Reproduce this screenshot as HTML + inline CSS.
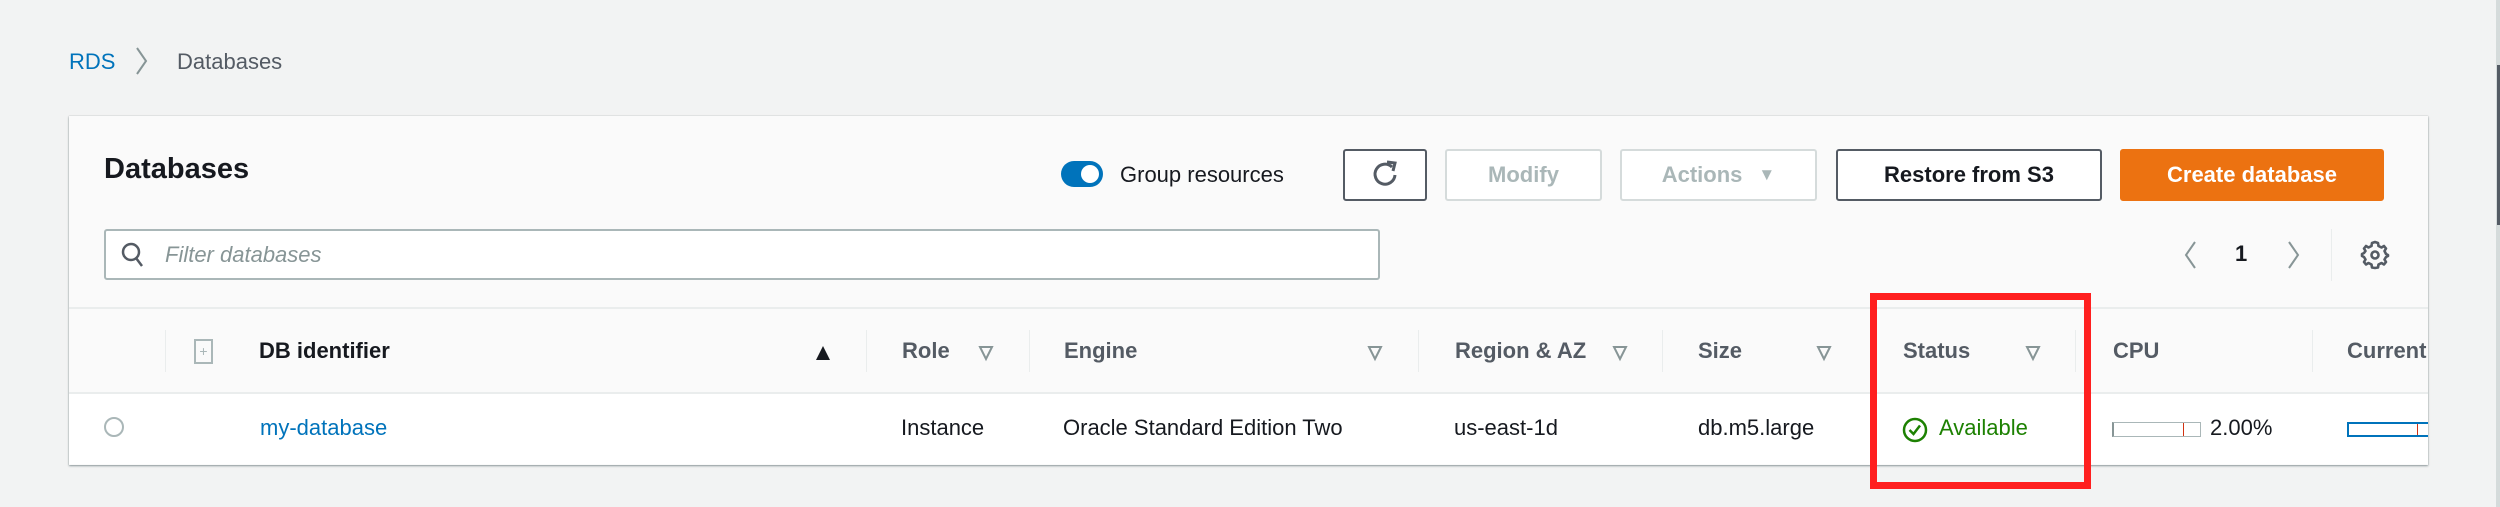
<!DOCTYPE html>
<html><head><meta charset="utf-8"><style>
*{margin:0;padding:0;box-sizing:border-box}
body{width:2500px;height:507px;background:#f2f3f3;font-family:"Liberation Sans",sans-serif;position:relative;overflow:hidden;color:#16191f}
.a{position:absolute;white-space:nowrap}
.t{font-size:22px;line-height:26px}
.b{font-weight:bold}
.btn{position:absolute;height:52px;border:2px solid #545b64;border-radius:3px;background:#fff;font-size:22px;font-weight:bold;display:flex;align-items:center;justify-content:center;color:#545b64}
.dis{border:2px solid #d5dbdb;color:#aab7b8}
.h{color:#545b64;font-weight:bold;font-size:22px;top:338px}
.div{position:absolute;top:330px;width:1px;height:42px;background:#eaeded}
.tri{position:absolute;top:344px}
</style></head><body>
<div class="a t" style="left:69px;top:49px;color:#0073bb">RDS</div>
<svg class="a" style="left:134px;top:46px" width="16" height="30"><path d="M3 2 L12 15 L3 28" stroke="#879596" stroke-width="2" fill="none"/></svg>
<div class="a t" style="left:177px;top:49px;color:#545b64">Databases</div>
<div class="a" style="right:0;top:0;width:4px;height:507px;background:#d5dbdb"></div>
<div class="a" style="right:0;top:65px;width:3px;height:160px;background:#545b64"></div>

<div class="a" style="left:69px;top:116px;width:2359px;height:349px;background:#fafafa;box-shadow:0 1px 2px rgba(0,28,36,.4),0 0 1px rgba(0,28,36,.25)"></div>
<div class="a b" style="left:104px;top:152px;font-size:29px;line-height:34px">Databases</div>

<div class="a" style="left:1061px;top:161px;width:42px;height:26px;border-radius:13px;background:#0073bb"></div>
<div class="a" style="left:1081px;top:165px;width:18px;height:18px;border-radius:9px;background:#fff"></div>
<div class="a t" style="left:1120px;top:162px;color:#16191f">Group resources</div>

<div class="btn" style="left:1343px;top:149px;width:84px"><svg width="30" height="32" viewBox="0 0 30 32"><path d="M22 8 A10 10 0 1 0 25 16" stroke="#545b64" stroke-width="3" fill="none"/><path d="M17 3 L25 4 L23 12" stroke="#545b64" stroke-width="3" fill="none"/></svg></div>
<div class="btn dis" style="left:1445px;top:149px;width:157px">Modify</div>
<div class="btn dis" style="left:1620px;top:149px;width:197px">Actions <span style="font-size:17px;margin-left:16px">▼</span></div>
<div class="btn" style="left:1836px;top:149px;width:266px;color:#16191f">Restore from S3</div>
<div class="btn" style="left:2120px;top:149px;width:264px;background:#ec7211;border-color:#ec7211;color:#fff">Create database</div>

<div class="a" style="left:104px;top:229px;width:1276px;height:51px;background:#fff;border:2px solid #aab7b8;border-radius:3px"></div>
<svg class="a" style="left:120px;top:241px" width="26" height="28"><circle cx="11" cy="11" r="8" stroke="#545b64" stroke-width="2.5" fill="none"/><path d="M16 17 L22 25" stroke="#545b64" stroke-width="2.5"/></svg>
<div class="a t" style="left:165px;top:242px;color:#879596;font-style:italic">Filter databases</div>

<svg class="a" style="left:2182px;top:240px" width="16" height="30"><path d="M13 2 L4 15 L13 28" stroke="#879596" stroke-width="2" fill="none"/></svg>
<div class="a t b" style="left:2235px;top:241px">1</div>
<svg class="a" style="left:2286px;top:240px" width="16" height="30"><path d="M3 2 L12 15 L3 28" stroke="#879596" stroke-width="2" fill="none"/></svg>
<div class="a" style="left:2331px;top:229px;width:1px;height:52px;background:#eaeded"></div>
<svg class="a" style="left:2360px;top:240px" width="30" height="30" viewBox="0 0 30 30"><path d="M15 2 L18 3 L18.5 6 L21.5 7.5 L24 6 L26 8.5 L24.5 11 L26 14 L28 15 L28 16 L26 17 L24.5 19.5 L26 22 L24 24.5 L21.5 23 L18.5 24.5 L18 27.5 L15 28 L12 27.5 L11.5 24.5 L8.5 23 L6 24.5 L4 22 L5.5 19.5 L4 17 L2 16 L2 14 L4 13 L5.5 11 L4 8.5 L6 6 L8.5 7.5 L11.5 6 L12 3 Z" stroke="#545b64" stroke-width="2.6" fill="none" stroke-linejoin="round"/><circle cx="15" cy="15" r="3.5" stroke="#545b64" stroke-width="2.6" fill="none"/></svg>

<div class="a" style="left:69px;top:307px;width:2359px;height:2px;background:#eaeded"></div>
<div class="a" style="left:69px;top:392px;width:2359px;height:72px;background:#fff;border-top:2px solid #eaeded"></div>

<div class="div" style="left:165px"></div>
<div class="div" style="left:866px"></div>
<div class="div" style="left:1029px"></div>
<div class="div" style="left:1418px"></div>
<div class="div" style="left:1662px"></div>
<div class="div" style="left:2075px"></div>
<div class="div" style="left:2312px"></div>

<div class="a" style="left:194px;top:339px;width:19px;height:25px;border:2px solid #aab7b8;color:#aab7b8;font-size:14px;text-align:center;line-height:20px">+</div>
<div class="a h" style="left:259px;color:#16191f">DB identifier</div>
<svg class="tri" style="left:814px" width="18" height="18"><path d="M9 2 L16 16 L2 16 Z" fill="#16191f"/></svg>
<div class="a h" style="left:902px">Role</div>
<svg class="tri" style="left:978px" width="16" height="18"><path d="M2 3 L14 3 L8 15 Z" stroke="#879596" stroke-width="2" fill="none"/></svg>
<div class="a h" style="left:1064px">Engine</div>
<svg class="tri" style="left:1367px" width="16" height="18"><path d="M2 3 L14 3 L8 15 Z" stroke="#879596" stroke-width="2" fill="none"/></svg>
<div class="a h" style="left:1455px">Region &amp; AZ</div>
<svg class="tri" style="left:1612px" width="16" height="18"><path d="M2 3 L14 3 L8 15 Z" stroke="#879596" stroke-width="2" fill="none"/></svg>
<div class="a h" style="left:1698px">Size</div>
<svg class="tri" style="left:1816px" width="16" height="18"><path d="M2 3 L14 3 L8 15 Z" stroke="#879596" stroke-width="2" fill="none"/></svg>
<div class="a h" style="left:1903px">Status</div>
<svg class="tri" style="left:2025px" width="16" height="18"><path d="M2 3 L14 3 L8 15 Z" stroke="#879596" stroke-width="2" fill="none"/></svg>
<div class="a h" style="left:2113px">CPU</div>
<div class="a" style="left:2347px;top:330px;width:81px;height:50px;overflow:hidden"><div class="a h" style="left:0;top:8px">Current activity</div></div>

<div class="a" style="left:104px;top:417px;width:20px;height:20px;border:2px solid #aab7b8;border-radius:50%"></div>
<div class="a t" style="left:260px;top:415px;color:#0073bb">my-database</div>
<div class="a t" style="left:901px;top:415px">Instance</div>
<div class="a t" style="left:1063px;top:415px">Oracle Standard Edition Two</div>
<div class="a t" style="left:1454px;top:415px">us-east-1d</div>
<div class="a t" style="left:1698px;top:415px">db.m5.large</div>
<svg class="a" style="left:1902px;top:416px" width="26" height="28"><circle cx="13" cy="14" r="11" stroke="#1d8102" stroke-width="2.5" fill="none"/><path d="M7.5 14 L11.5 18 L18 9.5" stroke="#1d8102" stroke-width="2.5" fill="none"/></svg>
<div class="a t" style="left:1939px;top:415px;color:#1d8102">Available</div>
<div class="a" style="left:2112px;top:422px;width:89px;height:15px;border:1px solid #aab7b8;border-left:2px solid #879596;background:#fff"></div>
<div class="a" style="left:2183px;top:423px;width:1px;height:13px;background:#d13212"></div>
<div class="a t" style="left:2210px;top:415px">2.00%</div>
<div class="a" style="left:2347px;top:422px;width:81px;height:15px;border:2px solid #0073bb;border-right:none;background:#fff"></div>
<div class="a" style="left:2417px;top:424px;width:1px;height:11px;background:#d13212"></div>

<div class="a" style="left:1870px;top:293px;width:221px;height:196px;border:7px solid #ff1f1f"></div>
</body></html>
